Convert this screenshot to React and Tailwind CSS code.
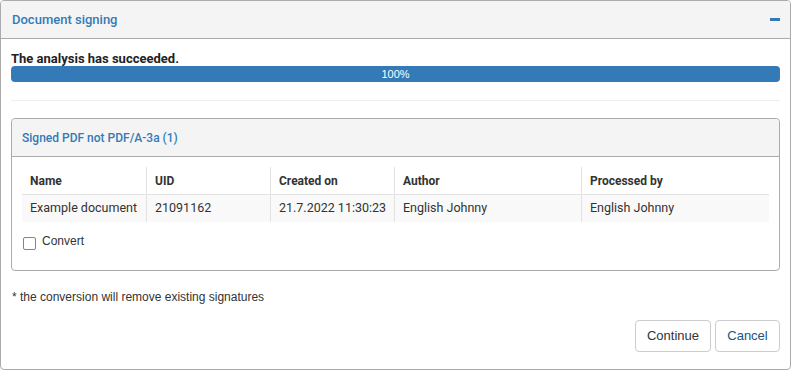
import React from "react";

const plex = { fontFamily: "Roboto, 'Noto Sans', sans-serif" };

export default function App() {
  const cols = [
    { h: "Name", v: "Example document", w: "w-[124px]" },
    { h: "UID", v: "21091162", w: "w-[124px]" },
    { h: "Created on", v: "21.7.2022 11:30:23", w: "w-[124px]" },
    { h: "Author", v: "English Johnny", w: "w-[187px]" },
    { h: "Processed by", v: "English Johnny", w: "flex-1" },
  ];
  return (
    <div className="w-[791px] h-[370px] bg-white" style={plex}>
      <div className="h-[370px] border border-[#ababab] rounded-[4px] flex flex-col overflow-hidden">
        <div className="h-[38px] shrink-0 bg-[#f4f4f4] border-b border-[#ababab] flex items-center justify-between pl-[11px] pr-[10px]">
          <span className="text-[13px] font-medium text-[#337ab7]">Document signing</span>
          <span className="w-[10px] h-[3px] bg-[#337ab7] block"></span>
        </div>
        <div className="flex-1 flex flex-col px-[10px]">
          <div className="mt-[12px] text-[13px] font-bold text-[#222] leading-[15px]">The analysis has succeeded.</div>
          <div className="mt-[0px] h-[16px] rounded-[4px] bg-[#337ab7] flex items-center justify-center text-white text-[11px] leading-none" style={{ fontFamily: "'Liberation Sans', Arial, sans-serif" }}>100%</div>
          <div className="mt-[18px] border-t border-[#eeeeee]"></div>
          <div className="mt-[17px] border border-[#ababab] rounded-[4px] h-[153px] flex flex-col">
            <div className="h-[38px] shrink-0 bg-[#f4f4f4] border-b border-[#ababab] rounded-t-[4px] flex items-center pl-[10px]">
              <span className="text-[12px] font-medium text-[#337ab7]">Signed PDF not PDF/A-3a (1)</span>
            </div>
            <div className="px-[10px] pt-[10px]">
              <div className="flex h-[28px] border-b border-[#e2e2e2]">
                {cols.map((c, i) => (
                  <div key={c.h} className={`${c.w} flex items-center pl-[8px] text-[12px] font-bold text-[#333] ${i > 0 ? "border-l border-[#e2e2e2]" : ""}`}>{c.h}</div>
                ))}
              </div>
              <div className="flex h-[27px] bg-[#f9f9f9]">
                {cols.map((c, i) => (
                  <div key={c.h} className={`${c.w} flex items-center pl-[8px] text-[12.5px] text-[#333] ${i > 0 ? "border-l border-[#e2e2e2]" : ""}`}>{c.v}</div>
                ))}
              </div>
              <div className="flex items-start mt-[13px] ml-[1px] gap-[6px]" style={{ fontFamily: "'Liberation Sans', Arial, sans-serif" }}>
                <span className="mt-[2px] w-[13px] h-[13px] border border-[#858585] rounded-[2px] bg-white block"></span>
                <span className="text-[12px] text-[#333] leading-[14px] -mt-[1px]">Convert</span>
              </div>
            </div>
          </div>
          <div className="mt-[17px] text-[12px] text-[#333] pl-[1px]" style={{ fontFamily: "'Liberation Sans', Arial, sans-serif" }}>* the conversion will remove existing signatures</div>
          <div className="mt-[14px] flex justify-end gap-[4px]" style={{ fontFamily: "'Liberation Sans', Arial, sans-serif" }}>
            <button className="h-[32px] w-[76px] border border-[#cccccc] rounded-[4px] bg-white text-[13px] text-[#333]">Continue</button>
            <button className="h-[32px] w-[65px] border border-[#cccccc] rounded-[4px] bg-white text-[13px] text-[#23527c]">Cancel</button>
          </div>
        </div>
      </div>
    </div>
  );
}
